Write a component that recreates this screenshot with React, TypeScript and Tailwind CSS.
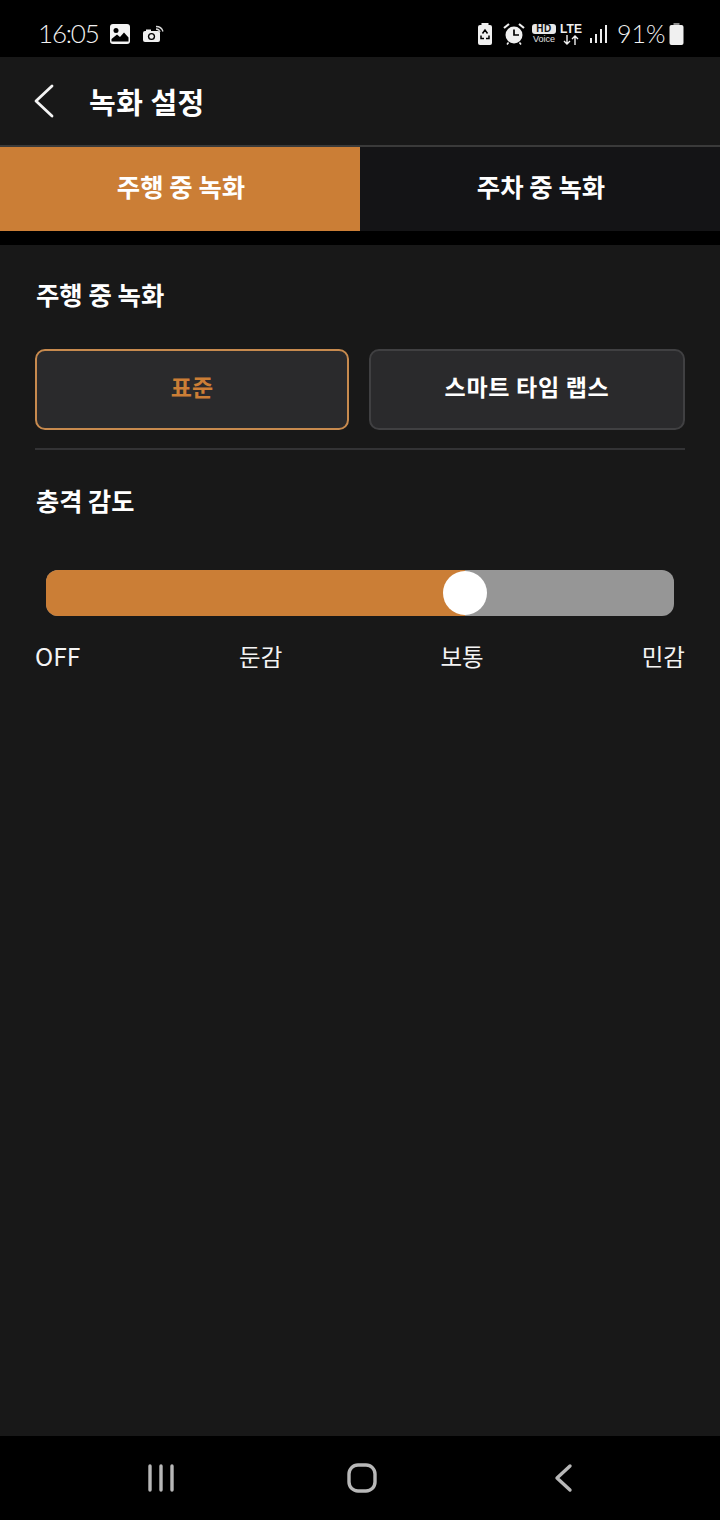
import React from "react";

const cjk = { fontFamily: '"Noto Sans CJK KR", "Noto Sans", sans-serif' };

function StatusBar() {
  return (
    <div className="h-[57px] bg-black flex items-center justify-between pt-[11px] pl-[38px] pr-[36px] text-[#f2f2f2]">
      <div className="flex items-center">
        <span className="mb-[2px] text-[26px] font-light w-[61px] leading-none tracking-[-1.2px]" style={{ fontFamily: "Lato, sans-serif" }}>16:05</span>
        <svg className="ml-[10px]" width="22" height="22" viewBox="0 0 22 22">
          <rect x="1" y="1" width="20" height="20" rx="3" fill="#f4f4f4" />
          <circle cx="7" cy="7.5" r="2.5" fill="#000" />
          <path d="M2.5 18.5 L2.5 16 L8 11.5 L11 14 L15 9.5 L19.5 14.5 L19.5 18.5 Z" fill="#000" />
        </svg>
        <svg className="ml-[11px]" width="22" height="18" viewBox="0 0 22 18">
          <rect x="1" y="6" width="17" height="11" rx="2" fill="#f0f0f0" />
          <rect x="4" y="4.5" width="5" height="2" fill="#f0f0f0" />
          <circle cx="9.5" cy="11.5" r="3.6" fill="#000" />
          <circle cx="9.5" cy="11.5" r="2.2" fill="#f0f0f0" />
          <path d="M14 4 Q17 4 18 7" stroke="#d8d8d8" strokeWidth="1.3" fill="none" />
          <path d="M14 1.5 Q19.5 1.5 21 6.5" stroke="#d8d8d8" strokeWidth="1.3" fill="none" />
        </svg>
      </div>
      <div className="flex items-center">
        <svg width="16" height="22" viewBox="0 0 16 22">
          <rect x="4.5" y="0" width="7" height="3" fill="#f0f0f0" />
          <rect x="1" y="2" width="14" height="20" rx="2" fill="#f0f0f0" />
          <path d="M5.5 10.5 L8 7 L10.5 10.5 M12 12.5 L12 15.5 H9 M4 12.5 L4 15.5 H7" stroke="#000" strokeWidth="1.5" fill="none" />
        </svg>
        <svg className="ml-[10px]" width="22" height="22" viewBox="0 0 22 22">
          <circle cx="11" cy="12" r="8.5" fill="#f0f0f0" />
          <path d="M11 6.5 V12 H16" stroke="#000" strokeWidth="1.7" fill="none" />
          <path d="M1 5 L6 1 M21 5 L16 1" stroke="#f0f0f0" strokeWidth="2.2" />
          <path d="M5.5 19.5 L4 21.5 M16.5 19.5 L18 21.5" stroke="#f0f0f0" strokeWidth="1.6" />
        </svg>
        <div className="ml-[7px] w-[24px] flex flex-col items-center">
          <span className="w-[24px] h-[10px] rounded-[3px] bg-[#e8e8e8] text-[#111] text-[10px] font-bold leading-[10px] text-center tracking-[0.5px]" style={{ fontFamily: '"Liberation Sans", sans-serif' }}>HD</span>
          <span className="text-[9px] leading-[9px] mt-[1px] text-[#e0e0e0]" style={{ fontFamily: '"Liberation Sans", sans-serif' }}>Voice</span>
        </div>
        <div className="ml-[4px] w-[22px] flex flex-col items-center">
          <span className="text-[12px] leading-[11px] font-bold text-[#f0f0f0]" style={{ fontFamily: '"Liberation Sans", sans-serif' }}>LTE</span>
          <svg width="16" height="10" viewBox="0 0 16 10">
            <path d="M4 0 V9 M1 6 L4 9 L7 6 M12 10 V1 M9 4 L12 1 L15 4" stroke="#f0f0f0" strokeWidth="1.4" fill="none" />
          </svg>
        </div>
        <svg className="ml-[7px]" width="20" height="20" viewBox="0 0 20 20">
          <rect x="1" y="14" width="2" height="5" fill="#eee" />
          <rect x="6" y="10" width="2" height="9" fill="#eee" />
          <rect x="11" y="5" width="2" height="14" fill="#eee" />
          <rect x="16" y="1" width="2" height="18" fill="#eee" />
        </svg>
        <span className="mb-[2px] ml-[8px] w-[49px] text-[25px] font-light leading-none" style={{ fontFamily: "Lato, sans-serif" }}>91%</span>
        <svg className="ml-[3px]" width="15" height="22" viewBox="0 0 15 22">
          <rect x="4.5" y="0" width="6" height="3" fill="#8c8c8c" />
          <rect x="0.5" y="2" width="14" height="20" rx="2" fill="#f0f0f0" />
        </svg>
      </div>
    </div>
  );
}

function Header() {
  return (
    <div className="h-[88px] flex items-center bg-[#181818] pl-[33px]">
      <svg width="22" height="34" viewBox="0 0 22 34">
        <path d="M19 2 L3 17 L19 32" stroke="#f4f4f4" strokeWidth="2.8" fill="none" strokeLinecap="round" strokeLinejoin="round" />
      </svg>
      <h1 className="ml-[34px] text-[29px] font-bold text-white leading-none tracking-[0.5px]" style={cjk}>녹화 설정</h1>
    </div>
  );
}

function Tabs() {
  return (
    <div className="border-t-2 border-[#3a3a3a] grid grid-cols-2 h-[86px] bg-[#141416]">
      <div className="bg-[#cb7e36] flex items-center justify-center pb-[5px] pl-[2px] text-white text-[25.4px] font-bold" style={cjk}>주행 중 녹화</div>
      <div className="flex items-center justify-center pb-[5px] pl-[2px] text-white text-[25.4px] font-bold" style={cjk}>주차 중 녹화</div>
    </div>
  );
}

function Option({ label, active }: { label: string; active?: boolean }) {
  return (
    <div
      className={`h-[81px] rounded-[10px] border-2 bg-[#2a2a2c] flex items-center justify-center pb-[7px] text-[23px] font-bold ${
        active ? "border-[#c78a4e] text-[#cb7e36]" : "border-[#404042] text-white tracking-[0.7px]"
      }`}
      style={cjk}
    >
      {label}
    </div>
  );
}

function Slider() {
  return (
    <div className="mx-[46px] mt-[51px] h-[46px] rounded-[12px] bg-[#969696] relative overflow-hidden flex">
      <div className="w-[419px] bg-[#cb7e36]" />
      <div className="absolute left-[397px] top-[1px] w-[44px] h-[44px] rounded-full bg-white" />
    </div>
  );
}

export default function App() {
  return (
    <div className="w-[720px] h-[1520px] bg-[#181818] flex flex-col overflow-hidden">
      <StatusBar />
      <Header />
      <Tabs />
      <div className="h-[14px] bg-black" />
      <main className="flex-1">
        <h2 className="mt-[30px] ml-[36px] text-[25.4px] leading-[38px] font-bold text-white" style={cjk}>주행 중 녹화</h2>
        <div className="mx-[35px] mt-[36px] grid grid-cols-[314px_316px] gap-x-[20px]">
          <Option label="표준" active />
          <Option label="스마트 타임 랩스" />
        </div>
        <div className="mx-[35px] mt-[18px] h-[2px] bg-[#333335]" />
        <h2 className="mt-[31px] ml-[36px] text-[25.2px] leading-[38px] font-bold text-white" style={cjk}>충격 감도</h2>
        <Slider />
        <div className="mx-[35px] mt-[21px] flex justify-between text-[23.5px] leading-[38px] text-[#f4f4f4]" style={cjk}>
          <span className="w-[46px] text-[24.5px]">OFF</span>
          <span>둔감</span>
          <span>보통</span>
          <span>민감</span>
        </div>
      </main>
      <div className="h-[84px] bg-black flex items-center pl-[148px]">
        <svg width="26" height="28" viewBox="0 0 26 28">
          <path d="M2 2 V26 M13 2 V26 M24 2 V26" stroke="#b8b8b8" strokeWidth="3.4" strokeLinecap="round" />
        </svg>
        <svg className="ml-[173px]" width="30" height="30" viewBox="0 0 30 30">
          <rect x="2" y="2" width="26" height="26" rx="9" stroke="#b8b8b8" strokeWidth="3.4" fill="none" />
        </svg>
        <svg className="ml-[177px]" width="20" height="30" viewBox="0 0 20 30">
          <path d="M16 3 L3 15 L16 27" stroke="#b8b8b8" strokeWidth="3.4" fill="none" strokeLinecap="round" strokeLinejoin="round" />
        </svg>
      </div>
    </div>
  );
}
